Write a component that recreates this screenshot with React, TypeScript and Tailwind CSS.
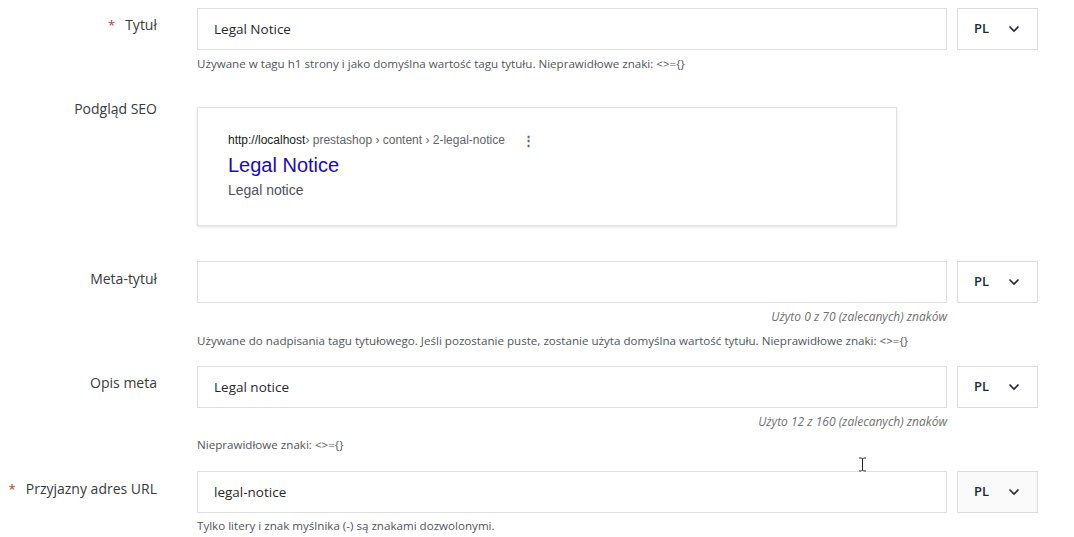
import React from "react";

const font = { fontFamily: '"Open Sans", "Noto Sans", sans-serif' };

const Chevron = () => (
    <svg width="12" height="8" viewBox="0 0 12 8" fill="none" stroke="#25292e" strokeWidth="1.6">
        <path d="M1.5 1.5 6 6l4.5-4.5" />
    </svg>
);

const LangBox = ({ hover }: { hover?: boolean }) => (
    <div
        className={`w-[81px] h-[42px] border border-[#dcdcdc] flex items-center justify-between pl-[16px] pr-[17px] ${
            hover ? "bg-[#fafafa]" : "bg-white"
        }`}
    >
        <span className="text-[13px] font-semibold text-[#25292e]">PL</span>
        <Chevron />
    </div>
);

const Label = ({ text, required, className = "" }: { text: string; required?: boolean; className?: string }) => (
    <div className={`w-[157px] shrink-0 flex justify-end text-[14px] leading-5 text-[#363a41] ${className}`}>
        {required && <span className="text-[#c0392b] mr-[10px] text-[13px]">*</span>}
        <span>{text}</span>
    </div>
);

const Field = ({ value, hover }: { value: string; hover?: boolean }) => (
    <div className="flex gap-[10px]">
        <div className="flex-1 h-[42px] border border-[#dfdfdf] bg-white flex items-center px-[16px] text-[13.5px] text-[#25292e]">
            {value}
        </div>
        <LangBox hover={hover} />
    </div>
);

const Help = ({ text, className = "" }: { text: string; className?: string }) => (
    <p className={`text-[11.6px] leading-4 text-[#50555b] ${className}`}>{text}</p>
);

const Counter = ({ text, className = "" }: { text: string; className?: string }) => (
    <p className={`text-[12px] leading-4 italic text-[#6f6f6f] text-right pr-[91px] ${className}`}>{text}</p>
);

const App = () => {
    return (
        <div className="relative w-[1074px] h-[537px] bg-white overflow-hidden" style={font}>
            <div className="flex pt-[8px]">
                <Label text="Tytuł" required className="pt-[7px]" />
                <div className="ml-[40px] w-[841px]">
                    <Field value="Legal Notice" />
                    <Help className="mt-[6px]" text="Używane w tagu h1 strony i jako domyślna wartość tagu tytułu. Nieprawidłowe znaki: <>={}" />
                </div>
            </div>

            <div className="flex mt-[27px]">
                <Label text="Podgląd SEO" />
                <div className="ml-[40px] w-[841px]">
                    <div className="mt-[8px] w-[700px] h-[119px] border border-[#e2e2e2] shadow-[0_1px_3px_rgba(0,0,0,0.12)] pl-[30px] pt-[25px]" style={{ fontFamily: '"Liberation Sans", Arial, sans-serif' }}>
                        <div className="flex items-center text-[12px] leading-[15px]">
                            <span className="text-[#202124]">http://localhost</span>
                            <span className="text-[#5f6368]">› prestashop › content › 2-legal-notice</span>
                            <span className="ml-[17px] text-[#5f6368] font-bold text-[13px]">⋮</span>
                        </div>
                        <div className="text-[20px] leading-[26px] text-[#1a0dab] mt-[4px]">Legal Notice</div>
                        <div className="text-[14px] leading-[20px] text-[#4d5156] mt-[2px]">Legal notice</div>
                    </div>
                </div>
            </div>

            <div className="flex mt-[35px]">
                <Label text="Meta-tytuł" className="pt-[8px]" />
                <div className="ml-[40px] w-[841px]">
                    <Field value="" />
                    <Counter className="mt-[6px]" text="Użyto 0 z 70 (zalecanych) znaków" />
                    <Help className="mt-[8px]" text="Używane do nadpisania tagu tytułowego. Jeśli pozostanie puste, zostanie użyta domyślna wartość tytułu. Nieprawidłowe znaki: <>={}" />
                </div>
            </div>

            <div className="flex mt-[17px]">
                <Label text="Opis meta" className="pt-[7px]" />
                <div className="ml-[40px] w-[841px]">
                    <Field value="Legal notice" />
                    <Counter className="mt-[6px]" text="Użyto 12 z 160 (zalecanych) znaków" />
                    <Help className="mt-[7px]" text="Nieprawidłowe znaki: <>={}" />
                </div>
            </div>

            <div className="flex mt-[18px]">
                <Label text="Przyjazny adres URL" required className="pt-[8px]" />
                <div className="ml-[40px] w-[841px]">
                    <Field value="legal-notice" hover />
                    <Help className="mt-[5px]" text="Tylko litery i znak myślnika (-) są znakami dozwolonymi." />
                </div>
            </div>

            {/* mouse cursor */}
            <svg className="absolute left-[858px] top-[457px]" width="9" height="15" viewBox="0 0 9 15" fill="none">
                <path d="M1 1h2.5l1 1 1-1H8M4.5 2v11M1 14h2.5l1-1 1 1H8" stroke="#fff" strokeWidth="2.5" />
                <path d="M1 1h2.5l1 1 1-1H8M4.5 2v11M1 14h2.5l1-1 1 1H8" stroke="#222" strokeWidth="1" />
            </svg>
        </div>
    );
};

export default App;
